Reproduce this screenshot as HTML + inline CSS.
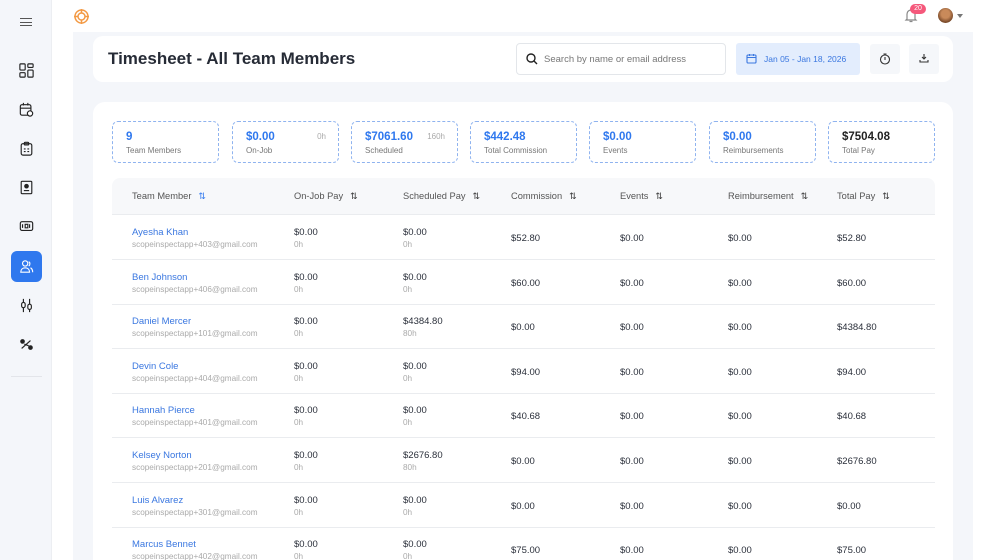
<!DOCTYPE html>
<html style="width:988px;height:560px;overflow:hidden"><head><meta charset="utf-8"><style>
*{box-sizing:border-box;margin:0;padding:0}
body{width:988px;height:560px;overflow:hidden;font-family:"Liberation Sans",sans-serif;background:#fff;position:relative;color:#222}
.side{position:absolute;left:0;top:0;width:52px;height:560px;background:#f4f6fa;border-right:1px solid #eceef2}
.ic{position:absolute;left:11px;width:31px;height:31px;display:flex;align-items:center;justify-content:center}
.ic svg{width:15px;height:15px;fill:none;stroke:#222;stroke-width:1.3}
.main{position:absolute;left:73px;top:32px;width:900px;height:528px;background:#f4f6fa}
.hdr{position:absolute;left:93px;top:36px;width:860px;height:46px;background:#fff;border-radius:10px}
.title{position:absolute;left:108px;top:49px;font-size:17px;font-weight:bold;color:#262b36}
.search{position:absolute;left:516px;top:43px;width:210px;height:32px;border:1px solid #e3e6ea;border-radius:4px;background:#fff}
.search span{position:absolute;left:27px;top:10px;font-size:9.5px;color:#777}
.date{position:absolute;left:736px;top:43px;width:124px;height:32px;background:#e3edfd;border-radius:3px}
.date span{position:absolute;left:28px;top:11px;font-size:8.5px;color:#3a77e0}
.sq{position:absolute;top:44px;width:30px;height:30px;background:#f5f7fa;border-radius:3px}
.card{position:absolute;left:93px;top:102px;width:860px;height:458px;background:#fff;border-radius:12px 12px 0 0}
.stat{position:absolute;top:121px;width:107px;height:42px;border:1.3px dashed #8fb3ef;border-radius:6px}
.stat b{position:absolute;left:13px;top:9px;font-size:11.5px;color:#2f78ee}
.stat span{position:absolute;left:13px;top:24px;font-size:8px;color:#777}
.stat i{position:absolute;right:12px;top:10px;font-size:8px;color:#aaa;font-style:normal}
.th{position:absolute;left:112px;top:178px;width:823px;height:37px;background:#f7f8fa;border-radius:8px 8px 0 0;border-bottom:1px solid #eaecef}
.th div{position:absolute;top:13px;font-size:9.3px;color:#555}
.th div em{font-style:normal;margin-left:7px;color:#333;font-size:9px}
.row{position:absolute;left:112px;width:823px;height:45px;border-bottom:1px solid #eaecef}
.row div{position:absolute;font-size:9.5px;color:#2a2f3a}
.nm{color:#3a77e0!important}
.sub{font-size:8.2px!important;color:#aaa!important}
</style></head><body>
<div class="side">
 <div style="position:absolute;left:20px;top:18px;width:12px;height:8px;border-top:1.3px solid #555;border-bottom:1.3px solid #555"></div>
 <div style="position:absolute;left:20px;top:21.5px;width:12px;height:1.3px;background:#555"></div>
 <div class="ic" style="top:55px"><svg viewBox="0 0 17 17"><rect x="1" y="1" width="6" height="7" rx="1"/><rect x="10" y="1" width="6" height="4" rx="1"/><rect x="1" y="11" width="6" height="5" rx="1"/><rect x="10" y="8" width="6" height="8" rx="1"/></svg></div>
 <div class="ic" style="top:94px"><svg viewBox="0 0 17 17"><rect x="1.5" y="3" width="12" height="12" rx="2"/><path d="M5 1v3M10 1v3M1.5 7h12"/><circle cx="12.5" cy="13" r="3" fill="#fff"/></svg></div>
 <div class="ic" style="top:133px"><svg viewBox="0 0 17 17"><rect x="2.5" y="3" width="12" height="13" rx="2"/><rect x="6" y="1.5" width="5" height="3" rx="1"/><path d="M5.5 9h2M9.5 9h2M5.5 12h2M9.5 12h2"/></svg></div>
 <div class="ic" style="top:172px"><svg viewBox="0 0 17 17"><rect x="2.5" y="1.5" width="12" height="14" rx="1"/><circle cx="8.5" cy="7" r="2" fill="#222"/><path d="M5.5 12h6"/></svg></div>
 <div class="ic" style="top:211px"><svg viewBox="0 0 17 17"><rect x="1.5" y="3" width="14" height="10" rx="2"/><path d="M4 6v4M7 6h3v4H7zM12 6v4"/></svg></div>
 <div style="position:absolute;left:11px;top:251px;width:31px;height:31px;background:#2f78ee;border-radius:6px"><svg viewBox="0 0 17 17" style="position:absolute;left:8px;top:8px;width:15px;height:15px;fill:none;stroke:#fff;stroke-width:1.3"><circle cx="7" cy="5" r="3"/><path d="M2 15c0-3 2-5 5-5s5 2 5 5zM11 3a3 3 0 010 5M13 10c2 1 2.5 3 2.5 5"/></svg></div>
 <div class="ic" style="top:290px"><svg viewBox="0 0 17 17"><path d="M5 1v15M12 1v15"/><rect x="3" y="5" width="4" height="6" rx="2" fill="#fff"/><rect x="10" y="7" width="4" height="6" rx="2" fill="#fff"/></svg></div>
 <div class="ic" style="top:329px"><svg viewBox="0 0 17 17"><circle cx="4" cy="5" r="2" fill="#222"/><circle cx="13" cy="12" r="2" fill="#222"/><path d="M3 13L13 4M6 8l5 2"/></svg></div>
 <div style="position:absolute;left:11px;top:376px;width:31px;height:1px;background:#e3e5ea"></div>
</div>
<svg style="position:absolute;left:73px;top:8px" width="17" height="17" viewBox="0 0 17 17" fill="none" stroke="#f39a45" stroke-width="1.5"><circle cx="8.5" cy="8.5" r="6.5"/><circle cx="8.5" cy="8.5" r="3.5"/><path d="M8.5 1v4M8.5 12v4M1 8.5h4M12 8.5h4"/></svg>
<svg style="position:absolute;left:904px;top:8px" width="14" height="15" viewBox="0 0 14 15" fill="none" stroke="#888" stroke-width="1.2"><path d="M3 11V6a4 4 0 018 0v5l1 1H2zM5.5 13.5h3"/></svg>
<div style="position:absolute;left:910px;top:4px;width:16px;height:10px;background:#f5587b;border-radius:5px;color:#fff;font-size:7px;text-align:center;line-height:10px">20</div>
<div style="position:absolute;left:938px;top:8px;width:15px;height:15px;border-radius:50%;background:radial-gradient(circle at 50% 40%,#c98a5a 35%,#7a4a2a 70%)"></div>
<div style="position:absolute;left:957px;top:14px;border-left:3.5px solid transparent;border-right:3.5px solid transparent;border-top:4px solid #777"></div>
<div class="main"></div>
<div class="hdr"></div>
<div class="title">Timesheet - All Team Members</div>
<div class="search"><svg style="position:absolute;left:9px;top:9px" width="12" height="12" viewBox="0 0 12 12" fill="none" stroke="#222" stroke-width="1.4"><circle cx="5" cy="5" r="4"/><path d="M8 8l3 3"/></svg><span>Search by name or email address</span></div>
<div class="date"><svg style="position:absolute;left:10px;top:10px" width="11" height="11" viewBox="0 0 11 11" fill="none" stroke="#3a77e0" stroke-width="1.1"><rect x="1" y="2" width="9" height="8" rx="1"/><path d="M1 4.5h9M3.5 1v2M7.5 1v2"/></svg><span>Jan 05 - Jan 18, 2026</span></div>
<div class="sq" style="left:870px"><svg style="position:absolute;left:9px;top:9px" width="12" height="12" viewBox="0 0 12 12" fill="none" stroke="#333" stroke-width="1.1"><circle cx="6" cy="6.5" r="4.5"/><path d="M6 4v3M4.5 1h3"/></svg></div>
<div class="sq" style="left:909px"><svg style="position:absolute;left:10px;top:9px" width="10" height="10" viewBox="0 0 10 10" fill="none" stroke="#333" stroke-width="1.1"><path d="M5 1v5M3 4l2 2 2-2M1 7v2h8V7"/></svg></div>
<div class="card"></div>
<div class="stat" style="left:112px"><b>9</b><span>Team Members</span></div>
<div class="stat" style="left:232px"><b>$0.00</b><span>On-Job</span><i>0h</i></div>
<div class="stat" style="left:351px"><b>$7061.60</b><span>Scheduled</span><i>160h</i></div>
<div class="stat" style="left:470px"><b>$442.48</b><span>Total Commission</span></div>
<div class="stat" style="left:589px"><b>$0.00</b><span>Events</span></div>
<div class="stat" style="left:709px"><b>$0.00</b><span>Reimbursements</span></div>
<div class="stat" style="left:828px"><b style="color:#222">$7504.08</b><span>Total Pay</span></div>
<div class="th">
<div style="left:20px">Team Member<em style="color:#2f78ee">⇅</em></div>
<div style="left:182px">On-Job Pay<em>⇅</em></div>
<div style="left:291px">Scheduled Pay<em>⇅</em></div>
<div style="left:399px">Commission<em>⇅</em></div>
<div style="left:508px">Events<em>⇅</em></div>
<div style="left:616px">Reimbursement<em>⇅</em></div>
<div style="left:725px">Total Pay<em>⇅</em></div>
</div>
<div id="rows"></div>
<script>
var d=[["Ayesha Khan",403,"$0.00","0h","$52.80","$52.80"],["Ben Johnson",406,"$0.00","0h","$60.00","$60.00"],["Daniel Mercer",101,"$4384.80","80h","$0.00","$4384.80"],["Devin Cole",404,"$0.00","0h","$94.00","$94.00"],["Hannah Pierce",401,"$0.00","0h","$40.68","$40.68"],["Kelsey Norton",201,"$2676.80","80h","$0.00","$2676.80"],["Luis Alvarez",301,"$0.00","0h","$0.00","$0.00"],["Marcus Bennet",402,"$0.00","0h","$75.00","$75.00"]];
var h="";d.forEach(function(r,i){var t=215+i*44.6;h+='<div class="row" style="top:'+t+'px">'+
'<div class="nm" style="left:20px;top:12px">'+r[0]+'</div><div class="sub" style="left:20px;top:25px">scopeinspectapp+'+r[1]+'@gmail.com</div>'+
'<div style="left:182px;top:12px">$0.00</div><div class="sub" style="left:182px;top:25px">0h</div>'+
'<div style="left:291px;top:12px">'+r[2]+'</div><div class="sub" style="left:291px;top:25px">'+r[3]+'</div>'+
'<div style="left:399px;top:18px">'+r[4]+'</div><div style="left:508px;top:18px">$0.00</div><div style="left:616px;top:18px">$0.00</div><div style="left:725px;top:18px">'+r[5]+'</div></div>';});
document.getElementById("rows").innerHTML=h;
</script>
</body></html>
